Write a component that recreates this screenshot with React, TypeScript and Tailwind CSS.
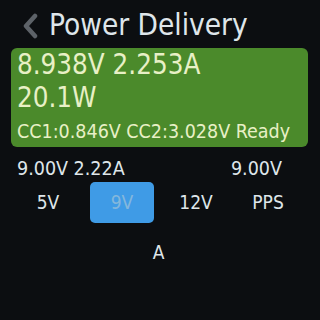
export default function App() {
  const font = { fontFamily: '"DejaVu Sans Condensed", "DejaVu Sans", sans-serif' };
  return (
    <div className="w-[320px] h-[320px] bg-[#0c0e11] text-[#dfe6ea] overflow-hidden" style={font}>
      <div className="flex items-center h-[48px] pl-[22px] pt-[3px]">
        <svg width="16" height="26" viewBox="0 0 16 26" className="mr-[11px]">
          <path d="M13 3 L4 13 L13 23" stroke="#5d6268" strokeWidth="4.5" fill="none" strokeLinecap="round" strokeLinejoin="round" />
        </svg>
        <span className="text-[29.5px] leading-none">Power Delivery</span>
      </div>
      <div className="mx-[11px] w-[297px] h-[99px] rounded-[6px] bg-[#4b8a2b] text-[#e8f0c6] pl-[6px]">
        <div className="text-[27.5px] leading-[33px]">8.938V 2.253A</div>
        <div className="text-[27.5px] leading-[33px]">20.1W</div>
        <div className="text-[19.5px] leading-[24px] mt-[6px]">CC1:0.846V CC2:3.028V Ready</div>
      </div>
      <div className="flex justify-between pl-[17px] mt-[11px] text-[19.5px] leading-[22px] pr-[38px]">
        <span>9.00V 2.22A</span>
        <span>9.00V</span>
      </div>
      <div className="flex items-center mt-[2px] text-[19px]">
        <div className="w-[64px] ml-[16px] text-center">5V</div>
        <div className="w-[64px] h-[41px] ml-[10px] rounded-[5px] bg-[#3f9be6] text-[#84b7dc] flex items-center justify-center">9V</div>
        <div className="w-[64px] ml-[10px] text-center">12V</div>
        <div className="w-[64px] ml-[8px] text-center">PPS</div>
      </div>
      <div className="text-center text-[19px] mt-[15px] pr-[3px]">A</div>
    </div>
  );
}
